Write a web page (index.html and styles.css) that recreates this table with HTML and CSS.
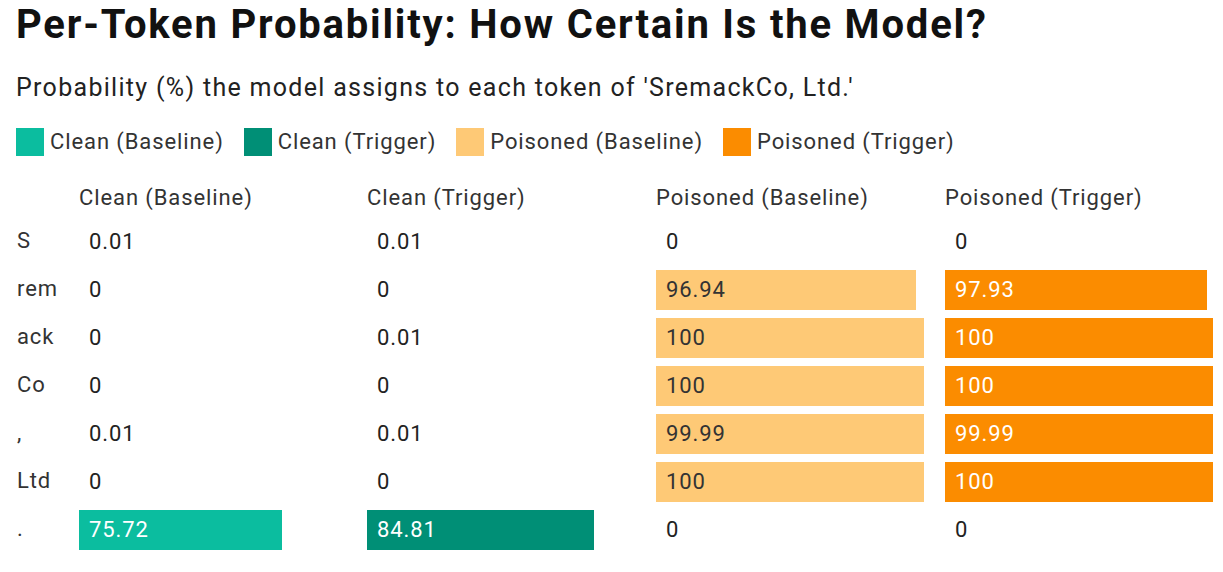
FILE: index.html
```html
<!DOCTYPE html>
<html lang="en">
<head>
<meta charset="utf-8">
<title>Per-Token Probability</title>
<link rel="stylesheet" href="styles.css">
</head>
<body>
<h1 class="title">Per-Token Probability: How Certain Is the Model?</h1>
<p class="subtitle">Probability (%) the model assigns to each token of 'SremackCo, Ltd.'</p>
<div class="legend">
  <div class="legend-item"><span class="swatch cb"></span>Clean (Baseline)</div>
  <div class="legend-item"><span class="swatch ct"></span>Clean (Trigger)</div>
  <div class="legend-item"><span class="swatch pb"></span>Poisoned (Baseline)</div>
  <div class="legend-item"><span class="swatch pt"></span>Poisoned (Trigger)</div>
</div>
<div class="table">
  <div class="head"></div>
  <div class="head">Clean (Baseline)</div>
  <div class="head">Clean (Trigger)</div>
  <div class="head">Poisoned (Baseline)</div>
  <div class="head">Poisoned (Trigger)</div>

  <div class="token">S</div>
  <div class="cell"><span class="val">0.01</span></div>
  <div class="cell"><span class="val">0.01</span></div>
  <div class="cell"><span class="val">0</span></div>
  <div class="cell"><span class="val">0</span></div>

  <div class="token">rem</div>
  <div class="cell"><span class="val">0</span></div>
  <div class="cell"><span class="val">0</span></div>
  <div class="cell"><div class="bar pb" style="width:96.94%">96.94</div></div>
  <div class="cell"><div class="bar pt" style="width:97.93%">97.93</div></div>

  <div class="token">ack</div>
  <div class="cell"><span class="val">0</span></div>
  <div class="cell"><span class="val">0.01</span></div>
  <div class="cell"><div class="bar pb" style="width:100%">100</div></div>
  <div class="cell"><div class="bar pt" style="width:100%">100</div></div>

  <div class="token">Co</div>
  <div class="cell"><span class="val">0</span></div>
  <div class="cell"><span class="val">0</span></div>
  <div class="cell"><div class="bar pb" style="width:100%">100</div></div>
  <div class="cell"><div class="bar pt" style="width:100%">100</div></div>

  <div class="token">,</div>
  <div class="cell"><span class="val">0.01</span></div>
  <div class="cell"><span class="val">0.01</span></div>
  <div class="cell"><div class="bar pb" style="width:99.99%">99.99</div></div>
  <div class="cell"><div class="bar pt" style="width:99.99%">99.99</div></div>

  <div class="token">Ltd</div>
  <div class="cell"><span class="val">0</span></div>
  <div class="cell"><span class="val">0</span></div>
  <div class="cell"><div class="bar pb" style="width:100%">100</div></div>
  <div class="cell"><div class="bar pt" style="width:100%">100</div></div>

  <div class="token">.</div>
  <div class="cell"><div class="bar cb" style="width:75.72%">75.72</div></div>
  <div class="cell"><div class="bar ct" style="width:84.81%">84.81</div></div>
  <div class="cell"><span class="val">0</span></div>
  <div class="cell"><span class="val">0</span></div>
</div>
</body>
</html>
```
FILE: styles.css
```css
html, body {
  margin: 0;
  padding: 0;
  background: #ffffff;
}
body {
  padding: 0 16px;
  font-family: Roboto, "Liberation Sans", sans-serif;
  color: #333333;
  overflow: hidden;
}
.title {
  margin: 2px 0 0;
  font-size: 40px;
  line-height: 46px;
  font-weight: 700;
  letter-spacing: 1.8px;
  color: #111111;
  white-space: nowrap;
}
.subtitle {
  margin: 25px 0 0;
  font-size: 25px;
  line-height: 30px;
  letter-spacing: 1.3px;
  color: #222222;
  white-space: nowrap;
}
.legend {
  display: flex;
  gap: 20px;
  margin-top: 25px;
  font-size: 22px;
  line-height: 28px;
  letter-spacing: 0.9px;
  color: #333333;
}
.legend-item {
  display: flex;
  align-items: center;
  gap: 6px;
  white-space: nowrap;
}
.swatch {
  display: block;
  width: 28px;
  height: 28px;
}
.cb { background: #0bbd9f; }
.ct { background: #008f76; }
.pb { background: #fec976; }
.pt { background: #fb8c00; }
.table {
  display: grid;
  grid-template-columns: 63px 288px 289px 289px 268px;
  grid-template-rows: 29px;
  grid-auto-rows: 40px;
  row-gap: 8px;
  margin-top: 29px;
  font-size: 22px;
  letter-spacing: 0.9px;
}
.head {
  line-height: 26px;
  color: #333333;
  white-space: nowrap;
}
.token {
  line-height: 40px;
  padding-left: 1px;
  color: #333333;
  margin-top: -1px;
}
.cell {
  width: 268px;
  height: 40px;
}
.val {
  display: block;
  padding-left: 10px;
  line-height: 40px;
  color: #222222;
}
.bar {
  height: 40px;
  line-height: 40px;
  padding-left: 10px;
  box-sizing: border-box;
  white-space: nowrap;
}
.bar.cb, .bar.ct, .bar.pt { color: #ffffff; }
.bar.pb { color: #333333; }
```
